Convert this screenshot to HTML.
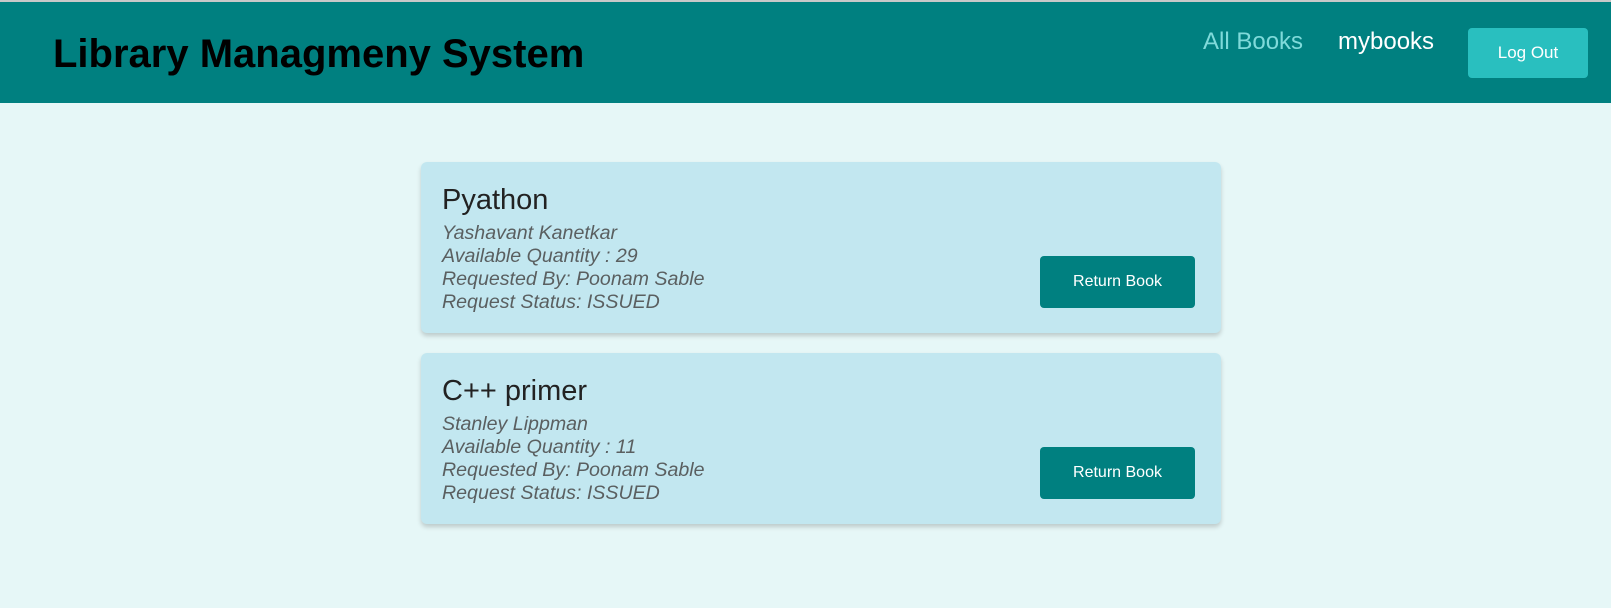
<!DOCTYPE html>
<html><head><meta charset="utf-8">
<style>
*{margin:0;padding:0;box-sizing:border-box}
body{width:1611px;height:608px;background:#e6f7f7;font-family:"Liberation Sans",Arial,sans-serif;position:relative;overflow:hidden}
.line{position:absolute;left:0;top:0;width:1611px;height:2px;background:#c8c8c8}
.hdr{position:absolute;left:0;top:2px;width:1611px;height:101px;background:#008080}
.title{position:absolute;left:53px;top:30px;font-size:40px;font-weight:bold;color:#000;line-height:44px;white-space:nowrap}
.nav{position:absolute;top:25px;font-size:24px;line-height:30px;white-space:nowrap}
.logout{position:absolute;left:1468px;top:26px;width:120px;height:50px;background:#29bfbf;border-radius:4px;color:#fff;font-size:17px;text-align:center;line-height:50px}
.card{position:absolute;left:421px;width:800px;height:171px;background:#c2e7f0;border-radius:6px;box-shadow:0 3px 5px rgba(0,0,0,.18)}
.card h2{position:absolute;left:21px;top:21px;font-size:29px;font-weight:normal;color:#222;line-height:34px}
.card .info{position:absolute;left:21px;top:60px;font-size:19.6px;font-style:italic;color:#5a5f60;line-height:23.1px}
.btn{position:absolute;left:619px;top:94px;width:155px;height:52px;background:#008080;border-radius:4px;color:#fff;font-size:16px;text-align:center;line-height:52px}
</style></head><body>
<div class="line"></div>
<div class="hdr">
<div class="title">Library Managmeny System</div>
<div class="nav" style="left:1203px;color:#7fdada">All Books</div>
<div class="nav" style="left:1338px;color:#fff">mybooks</div>
<div class="logout">Log Out</div>
</div>
<div class="card" style="top:162px">
<h2>Pyathon</h2>
<div class="info">Yashavant Kanetkar<br>Available Quantity : 29<br>Requested By: Poonam Sable<br>Request Status: ISSUED</div>
<div class="btn">Return Book</div>
</div>
<div class="card" style="top:353px">
<h2>C++ primer</h2>
<div class="info">Stanley Lippman<br>Available Quantity : 11<br>Requested By: Poonam Sable<br>Request Status: ISSUED</div>
<div class="btn">Return Book</div>
</div>
</body></html>
